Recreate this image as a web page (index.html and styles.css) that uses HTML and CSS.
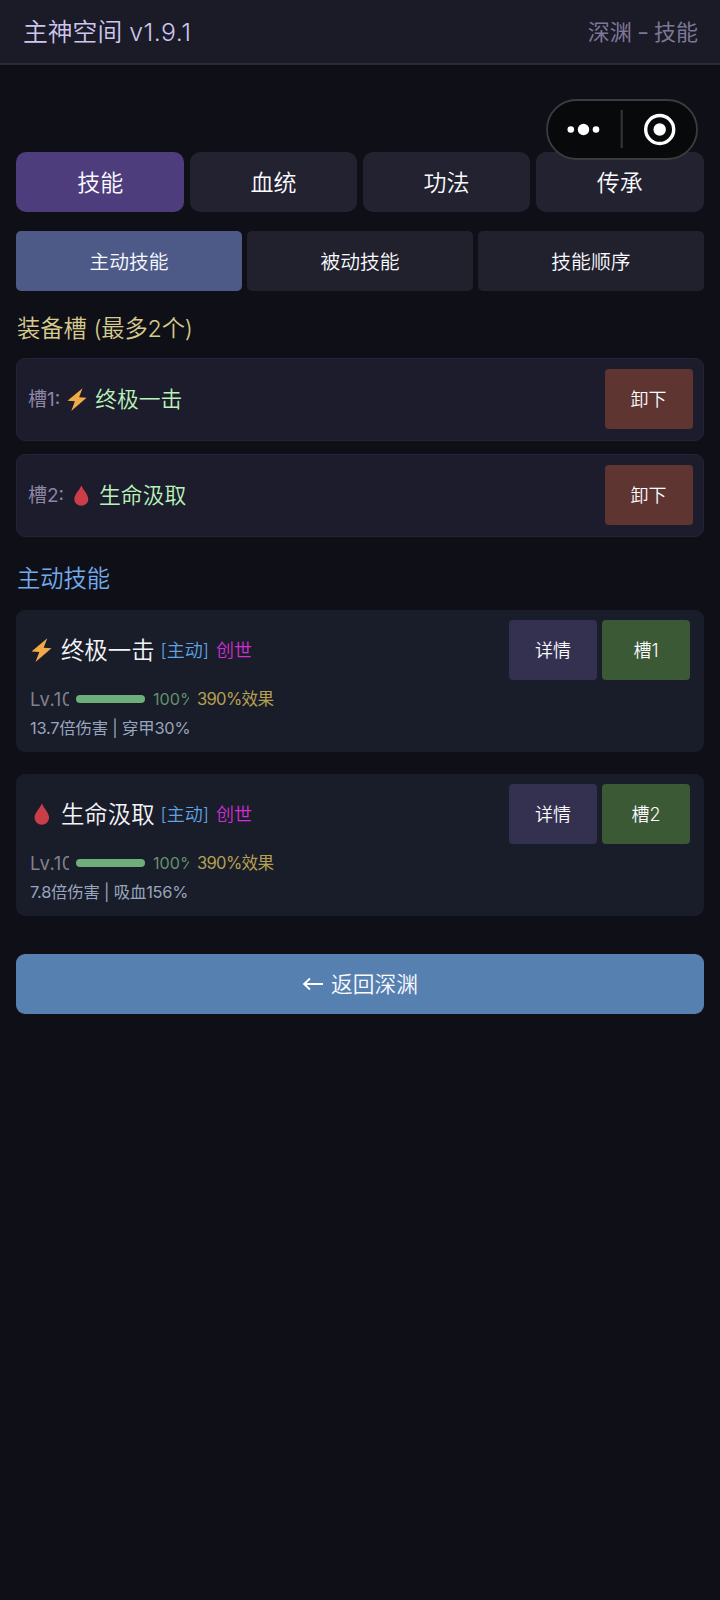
FILE: index.html
```html
<!DOCTYPE html>
<html lang="zh-CN">
<head>
<meta charset="utf-8">
<title>主神空间</title>
<link rel="stylesheet" href="styles.css">
</head>
<body>
<svg class="defs" width="0" height="0">
  <symbol id="bolt" viewBox="0 0 20 24"><path d="M15.800 0.300 0 13.400 7.800 13.900 4 24 20 10.300 12.200 9.700Z" fill="#f0aa48"/></symbol>
  <symbol id="drop" viewBox="0 0 20 24"><path d="M10.400 1.500C12.500 6.500 17.600 10.800 17.600 15.800A7.300 6.900 0 0 1 3 15.800C3 10.800 8.300 6.500 10.400 1.500Z" fill="#cb3d49"/></symbol>
</svg>
<header class="topbar">
  <h1 class="topbar-title">主神空间 <span class="version">v1.9.1</span></h1>
  <span class="topbar-place">深渊<span class="dash">-</span>技能</span>
</header>
<main class="page">
  <nav class="tabs">
    <button class="tab tab-active">技能</button>
    <button class="tab">血统</button>
    <button class="tab">功法</button>
    <button class="tab">传承</button>
  </nav>
  <nav class="subtabs">
    <button class="subtab subtab-active">主动技能</button>
    <button class="subtab">被动技能</button>
    <button class="subtab">技能顺序</button>
  </nav>

  <h2 class="heading heading-slots">装备槽 <span class="paren">(最多2个)</span></h2>
  <section class="slots">
    <div class="slot">
      <span class="slot-label">槽1:</span>
      <svg class="slot-icon slot-icon-bolt"><use href="#bolt"/></svg>
      <span class="slot-name">终极一击</span>
      <button class="btn btn-remove">卸下</button>
    </div>
    <div class="slot">
      <span class="slot-label">槽2:</span>
      <svg class="slot-icon slot-icon-drop"><use href="#drop"/></svg>
      <span class="slot-name">生命汲取</span>
      <button class="btn btn-remove">卸下</button>
    </div>
  </section>

  <h2 class="heading heading-active">主动技能</h2>
  <section class="skills">
    <article class="skill">
      <div class="skill-head">
        <svg class="skill-icon"><use href="#bolt"/></svg>
        <span class="skill-name">终极一击</span>
        <span class="skill-kind">[主动]</span>
        <span class="skill-rank">创世</span>
        <div class="skill-actions">
          <button class="btn btn-detail">详情</button>
          <button class="btn btn-slot">槽1</button>
        </div>
      </div>
      <div class="skill-level">
        <span class="level">Lv.10</span>
        <span class="bar"></span>
        <span class="percent">100%</span>
        <span class="effect">390%效果</span>
      </div>
      <p class="skill-stats">13.7倍伤害 | 穿甲30%</p>
    </article>
    <article class="skill">
      <div class="skill-head">
        <svg class="skill-icon"><use href="#drop"/></svg>
        <span class="skill-name">生命汲取</span>
        <span class="skill-kind">[主动]</span>
        <span class="skill-rank">创世</span>
        <div class="skill-actions">
          <button class="btn btn-detail">详情</button>
          <button class="btn btn-slot">槽2</button>
        </div>
      </div>
      <div class="skill-level">
        <span class="level">Lv.10</span>
        <span class="bar"></span>
        <span class="percent">100%</span>
        <span class="effect">390%效果</span>
      </div>
      <p class="skill-stats">7.8倍伤害 | 吸血156%</p>
    </article>
  </section>

  <button class="back">
    <svg class="back-arrow" viewBox="0 0 22 16"><path d="M21 8H2M8 2.500 2 8 8 13.500" fill="none" stroke="#fff" stroke-width="1.800"/></svg>
    <span class="back-text">返回深渊</span>
  </button>
</main>

<div class="capsule">
  <svg viewBox="0 0 152 61" width="152" height="61">
    <rect x="1" y="1" width="150" height="59" rx="29.500" fill="#08090a" fill-opacity=".95" stroke="#3c3c3f" stroke-width="1.800"/>
    <path d="M75.700 11V49" stroke="#343436" stroke-width="2.200"/>
    <g fill="#fff"><circle cx="24.800" cy="30.500" r="3.300"/><circle cx="37.500" cy="30.500" r="5.700"/><circle cx="50" cy="30.500" r="3.300"/><circle cx="113.700" cy="30.500" r="6.200"/></g>
    <circle cx="113.700" cy="30.500" r="14" fill="none" stroke="#fff" stroke-width="3.400"/>
  </svg>
</div>
</body>
</html>
```
FILE: styles.css
```css
* { box-sizing: border-box; }

body {
  margin: 0;
  min-height: 1600px;
  background: #0f0f17;
  color: #f4f4f8;
  font-family: Inter, "Noto Sans CJK SC", sans-serif;
  font-weight: 350;
}

h1, h2, p { margin: 0; font-weight: 350; }

button {
  border: 0;
  padding: 0 0 3px;
  font: inherit;
  color: #fafaff;
}

.defs { position: absolute; }

.topbar {
  display: flex;
  align-items: center;
  justify-content: space-between;
  height: 65px;
  padding: 1px 22px 0 23px;
  background: #1b1a27;
  border-bottom: 2px solid #2b2a39;
}

.topbar-title { font-size: 24.800px; color: #cdc6ee; line-height: 36px; white-space: nowrap; }
.version { letter-spacing: 0.5px; }
.topbar-place { font-size: 22px; color: #7d7796; line-height: 32px; }
.dash { display: inline-block; margin: 0 6px; transform: scaleX(1.2); }

.page { padding: 87px 16.400px 0; }

.tabs { display: grid; grid-template-columns: repeat(4, 1fr); gap: 5.500px; }
.tab { height: 60px; padding-bottom: 3px; border-radius: 10px; background: #232230; font-size: 23px; }
.tab-active { background: #4e3d7d; }

.subtabs { display: grid; grid-template-columns: repeat(3, 1fr); gap: 5.500px; margin-top: 19.400px; }
.subtab { height: 60px; padding-bottom: 2px; border-radius: 5px; background: #21212d; font-size: 19.800px; }
.subtab-active { background: #4d5a87; }

.heading { height: 34px; padding-left: 0.600px; font-size: 23.300px; line-height: 34px; }
.heading-slots { margin-top: 20.600px; color: #d6ca8d; }
.heading-active { margin-top: 25px; color: #72abec; }
.paren { letter-spacing: -0.2px; }

.slots { display: grid; gap: 13px; margin-top: 12px; }
.slot {
  display: flex;
  align-items: center;
  height: 83px;
  padding: 0 10px 0 10.600px;
  border: 1px solid #242337;
  border-radius: 9px;
  background: #1d1c2d;
}
.slot-label { padding-bottom: 3px; font-size: 19px; color: #8e86a6; }
.slot-icon { width: 20px; height: 23px; margin-left: 7px; }
.slot-icon-drop { margin-left: 7px; }
.slot-name { margin-left: 8px; padding-bottom: 4px; font-size: 21.800px; color: #b9f3b9; }

.btn { width: 88px; height: 60px; border-radius: 4px; font-size: 18px; }
.btn-remove { margin-left: auto; background: #5f3532; }
.btn-detail { background: #34304f; }
.btn-slot { background: #3c5935; }

.skills { display: grid; gap: 22px; margin-top: 14px; }
.skill {
  height: 142px;
  padding: 10.500px 13.600px 0;
  border-radius: 9px;
  background: #191c29;
}
.skill-head { display: flex; align-items: center; height: 60px; }
.skill-icon { width: 21px; height: 24px; margin-left: 1px; }
.skill-name { margin-left: 9px; padding-bottom: 3px; font-size: 23.400px; }
.skill-kind { margin-left: 6px; padding-bottom: 3px; font-size: 18px; color: #5fa3e2; }
.skill-rank { margin-left: 7px; padding-bottom: 3px; font-size: 18px; color: #cf2fd3; }
.skill-actions { display: flex; gap: 5px; margin-left: auto; }

.skill-level { display: flex; align-items: center; height: 28px; margin-top: 4.500px; line-height: 26px; }
.level { width: 39px; overflow: hidden; font-size: 18.500px; letter-spacing: 0.4px; color: #82808f; }
.bar { width: 69px; height: 8px; margin-left: 7px; border-radius: 4px; background: #6eae7b; }
.percent { width: 36px; margin-left: 8px; overflow: hidden; font-size: 16.200px; color: #63916c; }
.effect { margin-left: 8px; font-size: 16.600px; letter-spacing: -0.7px; color: #b5a050; white-space: nowrap; }
.skill-stats { height: 26px; margin-top: 2.500px; font-size: 16.400px; letter-spacing: -0.2px; line-height: 26px; color: #98a5bd; }

.back {
  display: flex;
  align-items: center;
  justify-content: center;
  gap: 7px;
  width: 100%;
  height: 60px;
  margin-top: 38.400px;
  padding: 0;
  border-radius: 9px;
  background: #5680af;
  font-size: 21.700px;
}
.back-arrow { width: 22px; height: 16px; }
.back-text { padding-bottom: 4px; }

.level, .percent, .effect, .skill-stats, .topbar-place, .slot-label { font-weight: 380; }

.capsule { position: absolute; left: 545.500px; top: 99px; line-height: 0; }
```
